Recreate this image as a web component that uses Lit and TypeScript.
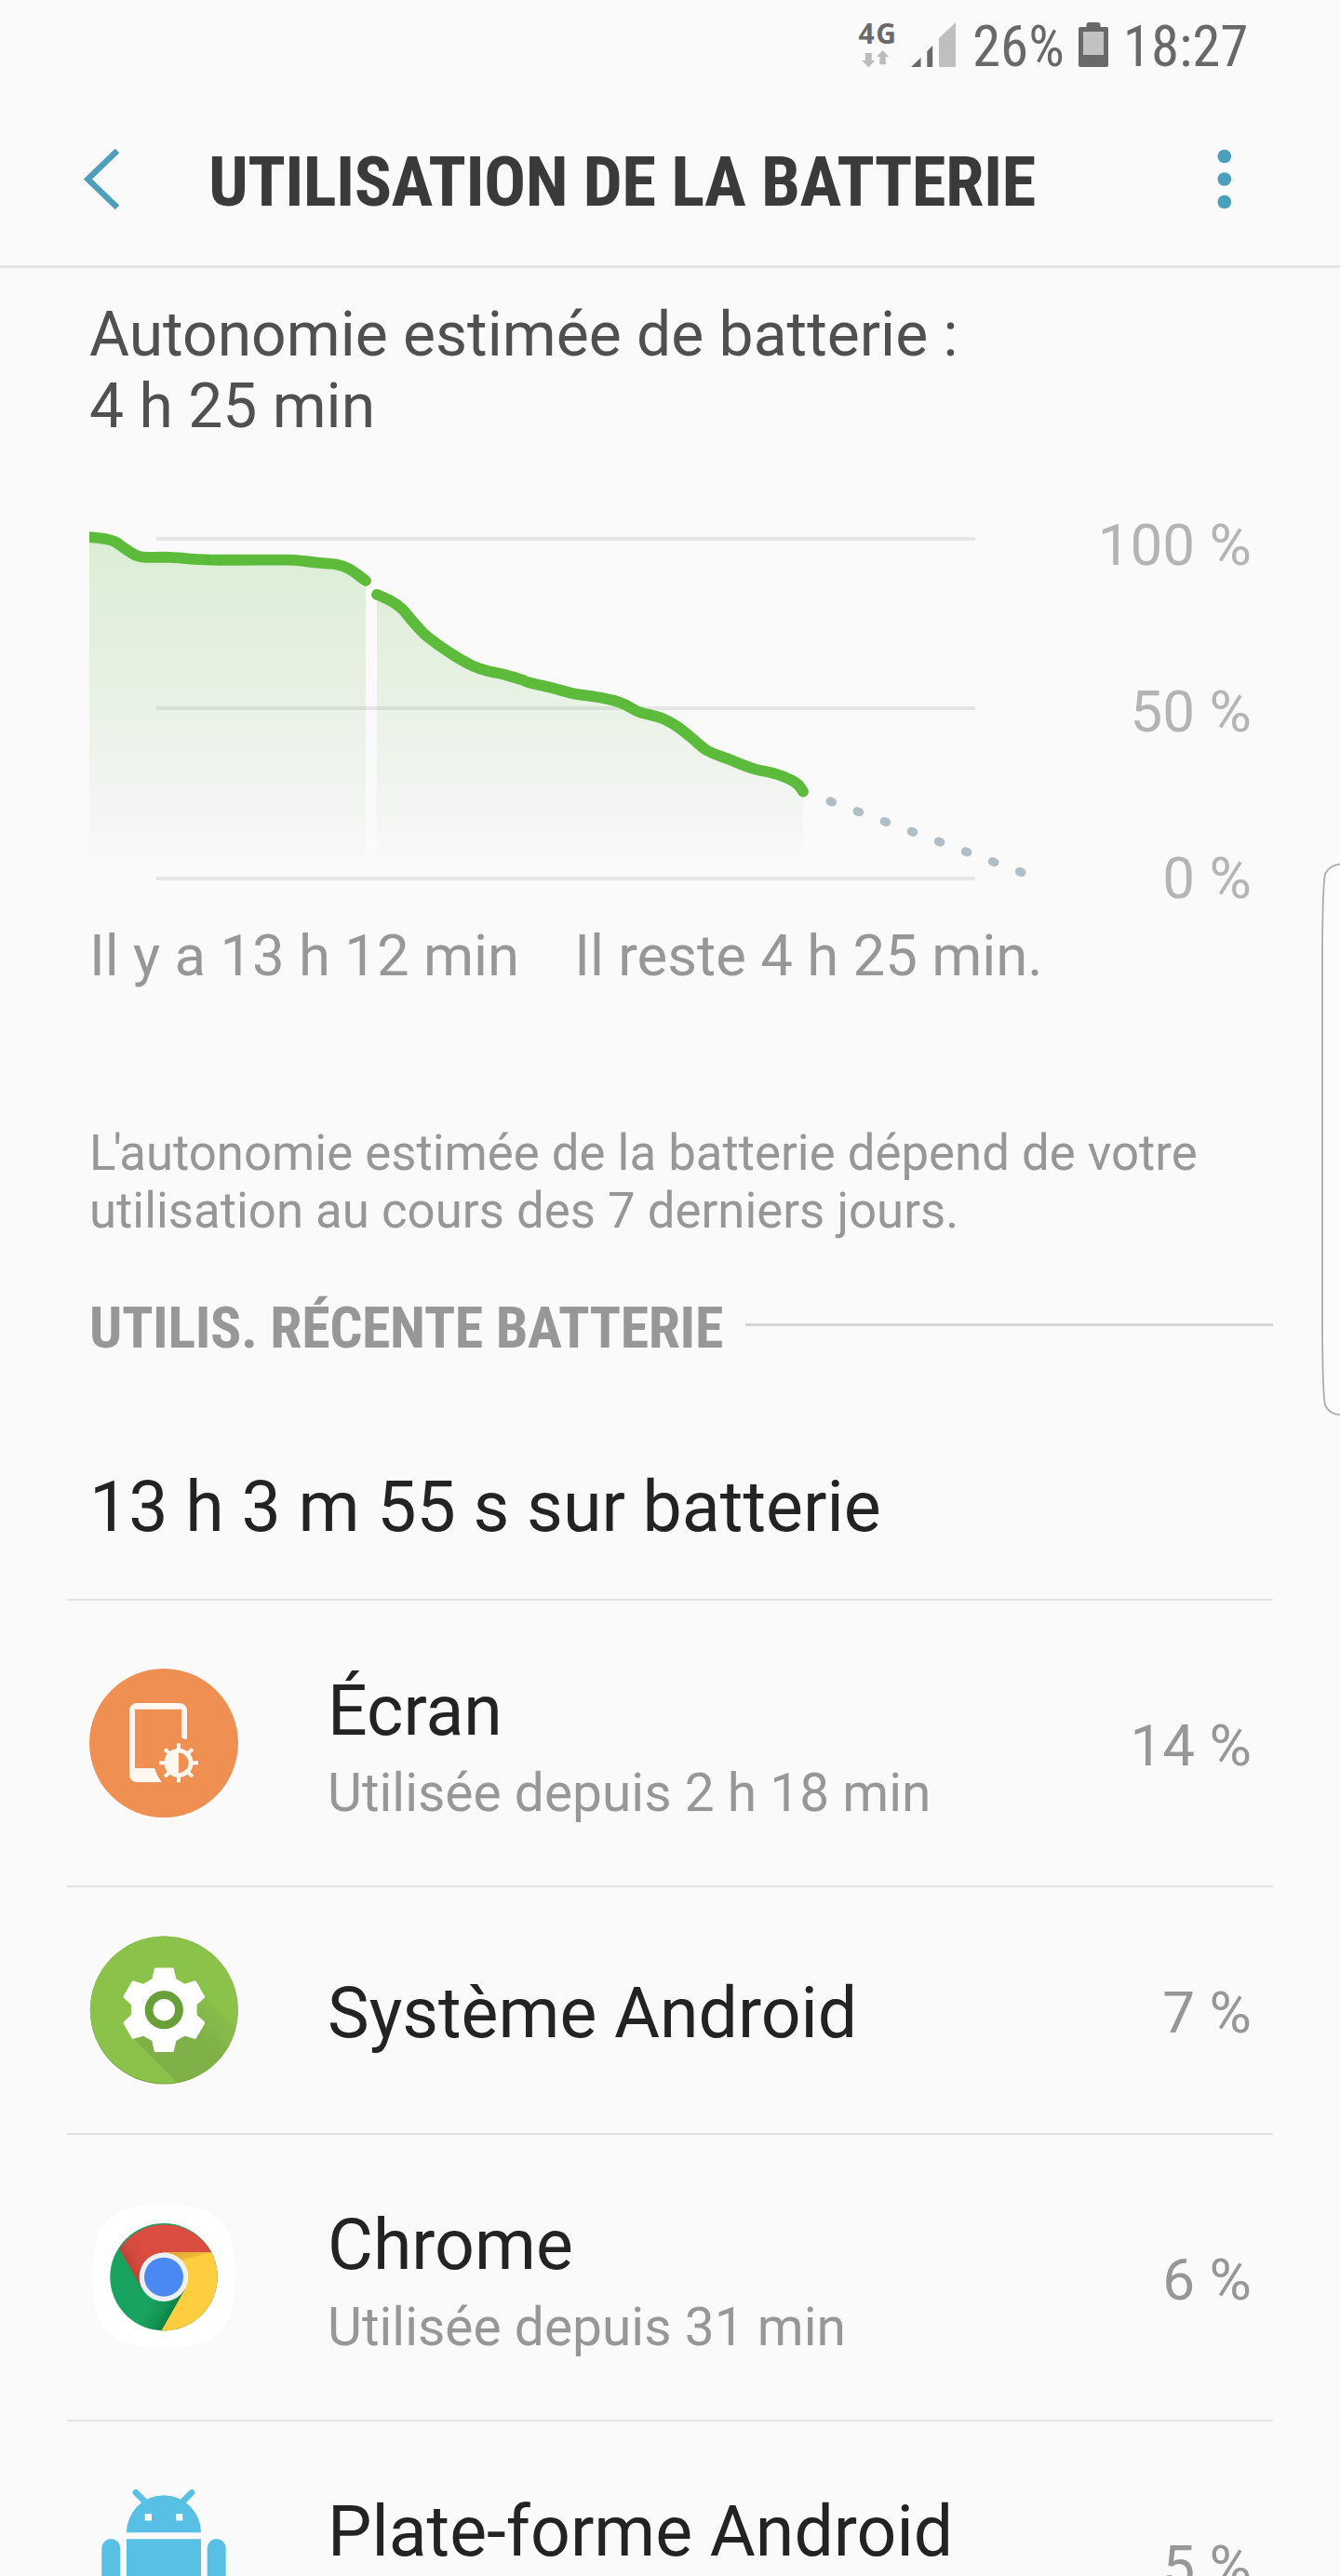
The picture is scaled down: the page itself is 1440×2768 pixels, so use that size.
import { LitElement, html, svg, css, nothing, type TemplateResult } from "lit";
import { customElement } from "lit/decorators.js";
import { classMap } from "lit/directives/class-map.js";

type Point = [number, number];

const BEFORE_GAP: Point[] = [
  [96, 577.2], [110, 578.6], [123.3, 582], [135, 590], [146.7, 597], [157, 598.9], [183.3, 598.9],
  [226.7, 601.6], [306.7, 601.6], [326.7, 603], [346.7, 605.2], [361.7, 606.5], [375, 611.2], [393, 624],
];

const AFTER_GAP: Point[] = [
  [405, 638.8], [420, 645.7], [431.7, 654], [443.3, 667.5], [456.7, 681.9], [473.3, 694.6], [490, 705.6],
  [508.3, 715.6], [523.3, 720.8], [543.3, 725.2], [560, 730.2], [570, 733.8], [591.7, 738.8], [616.7, 745.4],
  [640, 748.7], [660, 752.7], [671.7, 757.2], [686.7, 765], [710, 771.2], [726.7, 780], [741.7, 791.5],
  [760, 806.5], [783.3, 815.8], [808.3, 825.6], [835, 832], [855, 841], [863, 850.6],
];

/** Smooth curve through the given samples (Catmull-Rom converted to cubic segments). */
function smooth(points: Point[]): string {
  const f = (n: number) => n.toFixed(1);
  let d = `M${f(points[0][0])} ${f(points[0][1])}`;
  for (let i = 0; i < points.length - 1; i++) {
    const p0 = points[Math.max(0, i - 1)];
    const p1 = points[i];
    const p2 = points[i + 1];
    const p3 = points[Math.min(points.length - 1, i + 2)];
    d += ` C${f(p1[0] + (p2[0] - p0[0]) / 6)} ${f(p1[1] + (p2[1] - p0[1]) / 6)}`;
    d += ` ${f(p2[0] - (p3[0] - p1[0]) / 6)} ${f(p2[1] - (p3[1] - p1[1]) / 6)} ${f(p2[0])} ${f(p2[1])}`;
  }
  return d;
}

/** Six-toothed cog centred on the origin. */
function cog(): string {
  const tooth: Point[] = [[-11.6, -32.2], [-9, -43.6], [9, -43.6], [11.6, -32.2]];
  const parts: string[] = [];
  for (let k = 0; k < 6; k++) {
    const a = (k * Math.PI) / 3;
    for (const [x, y] of tooth) {
      parts.push(
        `${(x * Math.cos(a) - y * Math.sin(a)).toFixed(2)} ${(x * Math.sin(a) + y * Math.cos(a)).toFixed(2)}`,
      );
    }
  }
  return `M${parts.join("L")}Z`;
}

const screenIcon = svg`
  <circle cx="80" cy="80" r="80" fill="#ef9052"/>
  <path fill="#fff8f0" d="M43 45a8 8 0 0 1 8-8H97a8 8 0 0 1 8 8V76L99 74.8V43.7H49V107H70Q72.500 115 77.700 122H51a8 8 0 0 1-8-8Z"/>
  <g stroke="#fff8f0" stroke-width="4">
    ${[0, 45, 90, 135].map((a) => svg`<path d="M96 80.300V122.300" transform="rotate(${a} 96 101.300)"/>`)}
  </g>
  <circle cx="96" cy="101.300" r="15.500" fill="#fff8f0"/>
  <path fill="#ef9052" d="M96 90.600a10.700 10.700 0 0 1 0 21.400Z"/>`;

const systemIcon = svg`
  <defs>
    <clipPath id="disc"><circle cx="80.300" cy="80" r="79.500"/></clipPath>
    <linearGradient id="cast" gradientUnits="userSpaceOnUse" x1="95" y1="125" x2="142" y2="78">
      <stop offset="0" stop-color="#80b048"/><stop offset=".45" stop-color="#80b149"/><stop offset="1" stop-color="#89bf4a"/>
    </linearGradient>
  </defs>
  <circle cx="80.300" cy="80" r="79.500" fill="#729f40"/>
  <g clip-path="url(#disc)">
    <circle cx="80.300" cy="79" r="79.500" fill="#8bc34a"/>
    <path fill="url(#cast)" d="M47 110.500L96 159.500L165 165V106L122.500 64.500L80 80Z"/>
  </g>
  <g transform="translate(80.300 79.700)">
    <path fill="#fff" stroke="#fff" stroke-width="3.200" stroke-linejoin="round" d=${cog()}/>
    <circle r="16.200" fill="none" stroke="#689f38" stroke-width="8.800"/>
  </g>`;

const chromeIcon = svg`
  <defs>
    <linearGradient id="red" gradientUnits="userSpaceOnUse" x1="38" y1="73" x2="66" y2="57">
      <stop offset="0" stop-color="#b53a30"/><stop offset=".5" stop-color="#d24a3e"/><stop offset="1" stop-color="#dc4d41"/>
    </linearGradient>
    <linearGradient id="gold" gradientUnits="userSpaceOnUse" x1="92" y1="53" x2="95" y2="63">
      <stop offset="0" stop-color="#e2a633"/><stop offset="1" stop-color="#f0b83a"/>
    </linearGradient>
    <linearGradient id="green" gradientUnits="userSpaceOnUse" x1="91" y1="117" x2="68" y2="104">
      <stop offset="0" stop-color="#0c7f42"/><stop offset=".5" stop-color="#149655"/><stop offset="1" stop-color="#1aa260"/>
    </linearGradient>
  </defs>
  <path fill="#fff" d="M80 1.700C138 1.700 156.700 21 156.700 78.700S138 155.700 80 155.700S3.300 136 3.300 78.700S22 1.700 80 1.700Z"/>
  <circle cx="80" cy="79.700" r="57.700" fill="url(#green)"/>
  <path fill="url(#red)" d="M32.300 49.700A57.800 57.800 0 0 1 131.400 53.300H80V79.700L57.200 92.900Z"/>
  <path fill="#ffcd40" d="M131.400 53.300A57.800 57.800 0 0 1 77.400 137.400L102.800 92.900L80 79.700V53.300Z"/>
  <path fill="url(#gold)" d="M80 53.300H131.400L98 62Z"/>
  <circle cx="80" cy="79.700" r="26.300" fill="#eef0f1"/>
  <circle cx="80" cy="79.700" r="21" fill="#4a89f3"/>`;

const androidIcon = svg`
  <g fill="#58c0e4">
    <path d="M40 46.300a40 40 0 0 1 80 0Z"/>
    <path d="M40 53.300H120V122a8 8 0 0 1-8 8H48a8 8 0 0 1-8-8Z"/>
    <rect x="13.300" y="53" width="20" height="66" rx="10"/>
    <rect x="126.700" y="53" width="20" height="66" rx="10"/>
  </g>
  <path stroke="#58c0e4" stroke-width="6.600" stroke-linecap="round" d="M50 3.300L62 15.300M110 3.300L98 15.300"/>
  <path fill="#fafafa" d="M59.700 26.300h7.300v7.300h-7.300zM93 26.300h7.300v7.300H93z"/>`;

interface Usage {
  name: string;
  detail?: string;
  percent: string;
  tall: boolean;
  icon: TemplateResult<2>;
}

const USAGES: Usage[] = [
  { name: "Écran", detail: "Utilisée depuis 2 h 18 min", percent: "14 %", tall: true, icon: screenIcon },
  { name: "Système Android", percent: "7 %", tall: false, icon: systemIcon },
  { name: "Chrome", detail: "Utilisée depuis 31 min", percent: "6 %", tall: true, icon: chromeIcon },
  { name: "Plate-forme Android", percent: "5 %", tall: true, icon: androidIcon },
];

@customElement("status-bar")
class StatusBar extends LitElement {
  static styles = css`
    :host { display: flex; align-items: flex-start; justify-content: flex-end; height: 100px; padding-right: 98.500px; box-sizing: border-box; color: #696969; }
    svg { display: block; flex: none; }
    .net { width: 42px; padding-top: 21px; }
    .gen { font: 700 30px/30px "Open Sans", "Noto Sans", sans-serif; letter-spacing: 1.6px; white-space: nowrap; }
    .signal { margin: 24px 16.500px 0 14px; }
    .battery { margin: 24px 14.500px 0 14.500px; }
    .text { font: 400 61px/100px "Roboto Condensed", Roboto, sans-serif; white-space: nowrap; }
  `;
  render() {
    return html`
      <div class="net">
        <div class="gen">4G</div>
        <svg width="42" height="22" viewBox="921.7 51 42 22" fill="#bdbdbd">
          <path d="M929.500 57h7v8h3.500l-7 7.500l-7-7.500h3.500zM948.300 54l6.700 7h-3.500v8.300h-6.500v-8.300h-3.500z"/>
        </svg>
      </div>
      <svg class="signal" width="50" height="48" viewBox="978 24 50 48">
        <path fill="#696969" d="M979 72L989.500 62V72ZM996.300 72V55L1002.200 49V72Z"/>
        <path fill="#bfbfbf" d="M1009 72V41L1027 24V72Z"/>
      </svg>
      <span class="text">26%</span>
      <svg class="battery" width="34" height="48" viewBox="1158 24 34 48">
        <path fill="#696969" d="M1161 29H1167.500V27a3 3 0 0 1 3-3H1179.500a3 3 0 0 1 3 3V29H1189a2 2 0 0 1 2 2V70a2 2 0 0 1-2 2H1161a2 2 0 0 1-2-2V31a2 2 0 0 1 2-2Z"/>
        <path fill="#c2c2c2" d="M1164 34H1186V59H1164Z"/>
      </svg>
      <span class="text">18:27</span>`;
  }
}

@customElement("battery-chart")
class BatteryChart extends LitElement {
  static styles = css`
    :host { display: flex; justify-content: space-between; height: 418px; }
    .plot { display: block; width: 1020px; height: 418px; }
    .scale { display: flex; flex-direction: column; justify-content: space-between; align-items: flex-end; font-size: 62px; line-height: 60px; color: #b4b4b4; white-space: nowrap; }
  `;
  private area(points: Point[]) {
    const first = points[0];
    const last = points[points.length - 1];
    return `${smooth(points)}L${last[0]} 931H${first[0]}Z`;
  }
  render() {
    return html`
      <svg class="plot" viewBox="96 556 1020 418">
        <defs>
          <linearGradient id="fade" gradientUnits="userSpaceOnUse" x1="0" y1="580" x2="0" y2="931">
            <stop offset="0" stop-color="#5dbb3c" stop-opacity=".2"/>
            <stop offset=".5" stop-color="#62b444" stop-opacity=".115"/>
            <stop offset=".8" stop-color="#7fa873" stop-opacity=".06"/>
            <stop offset=".93" stop-color="#8c9c86" stop-opacity=".03"/>
            <stop offset="1" stop-color="#999" stop-opacity="0"/>
          </linearGradient>
        </defs>
        <path fill="#e6e6e6" d="M168 577H1048V581H168ZM168 759H1048V763H168ZM168 942H1048V946H168Z"/>
        <path fill="url(#fade)" d=${this.area(BEFORE_GAP)}/>
        <path fill="url(#fade)" d=${this.area(AFTER_GAP)}/>
        <g fill="none" stroke="#5dbb3c" stroke-width="11.800" stroke-linecap="round" stroke-linejoin="round">
          <path d=${smooth(BEFORE_GAP)}/>
          <path d=${smooth(AFTER_GAP)}/>
        </g>
        <g stroke="#b0bec5" stroke-width="9.400" stroke-linecap="round">
          ${Array.from({ length: 8 }, (_, i) => {
            const x = 893.3 + i * 29.07;
            const y = 861.4 + i * 10.8;
            return svg`<path d="M${x - 1.1} ${y - 0.4}L${x + 1.1} ${y + 0.4}"/>`;
          })}
        </g>
      </svg>
      <div class="scale"><span>100 %</span><span>50 %</span><span>0 %</span></div>`;
  }
}

@customElement("app-root")
class AppRoot extends LitElement {
  static styles = css`
    :host { display: block; position: relative; width: 1440px; height: 2768px; overflow: hidden; background: #fafafa; font-family: Roboto, sans-serif; font-weight: 400; }
    svg { display: block; flex: none; }
    .header { display: flex; align-items: center; box-sizing: border-box; height: 188px; padding: 0 116px 0 90px; border-bottom: 3px solid #e6e6e6; }
    .title { margin: 0 auto 0 96px; padding-top: 4px; font: 700 75px/88px "Roboto Condensed", Roboto, sans-serif; letter-spacing: -0.63px; color: #3a3a3a; white-space: nowrap; }
    .content { padding: 33px 95px 0 96px; }
    .estimate { font-size: 66px; line-height: 77px; color: #505050; }
    .chart { margin-top: 81px; }
    .captions { display: flex; gap: 59px; margin-top: 17px; font-size: 61.700px; line-height: 72px; color: #979797; white-space: nowrap; }
    .note { margin-top: 145px; font-size: 52.750px; line-height: 62px; color: #979797; white-space: nowrap; }
    .elided { letter-spacing: -2.700px; }
    .section { display: flex; align-items: center; gap: 24px; margin: 59px -23px 0 0; }
    .section-name { font: 700 62px/72px "Roboto Condensed", Roboto, sans-serif; letter-spacing: -0.45px; color: #979797; white-space: nowrap; }
    .rule { flex: 1; height: 3px; margin-bottom: 7px; background: #d4d4d4; }
    .elapsed { margin-top: 112px; font-size: 75.300px; line-height: 88px; color: #232323; }
    .list { margin: 55px 72px 0; }
    .row { display: flex; align-items: center; box-sizing: border-box; height: 266px; padding: 0 23px 0 24px; border-top: 2px solid #e3e3e3; }
    .row.tall { height: 308px; }
    .label { flex: 1; margin: 6px 0 0 96px; }
    .tall .label { height: 170px; margin-top: 11px; }
    .name { font-size: 75.200px; line-height: 88px; color: #232323; }
    .detail { margin-top: 8px; font-size: 56.900px; line-height: 74px; color: #979797; }
    .percent { margin-top: 5px; font-size: 62px; line-height: 72px; color: #979797; }
    .edge { position: absolute; top: 926.500px; right: 0; }
  `;

  private row(u: Usage) {
    return html`
      <div class=${classMap({ row: true, tall: u.tall })}>
        <svg width="160" height="160" viewBox="0 0 160 160">${u.icon}</svg>
        <div class="label">
          <div class="name">${u.name}</div>
          ${u.detail ? html`<div class="detail">${u.detail}</div>` : nothing}
        </div>
        <div class="percent">${u.percent}</div>
      </div>`;
  }

  render() {
    return html`
      <status-bar></status-bar>
      <div class="header">
        <svg width="38" height="66" viewBox="90 159.5 38 66" fill="none" stroke="#4f9fbc" stroke-width="6.500">
          <path d="M126 161.500L94.500 192L126 222.500"/>
        </svg>
        <div class="title">UTILISATION DE LA BATTERIE</div>
        <svg width="16" height="66" viewBox="1308 159.500 16 66" fill="#4a9fbc">
          <circle cx="1315.800" cy="167.500" r="7.300"/><circle cx="1315.800" cy="192" r="7.300"/><circle cx="1315.800" cy="216.500" r="7.300"/>
        </svg>
      </div>
      <div class="content">
        <div class="estimate">Autonomie estimée de batterie :<br>4 h 25 min</div>
        <battery-chart class="chart"></battery-chart>
        <div class="captions"><span>Il y a 13 h 12 min</span><span>Il reste 4 h 25 min.</span></div>
        <div class="note"><span class="elided">L'</span>autonomie estimée de la batterie dépend de votre<br>utilisation au cours des 7 derniers jours.</div>
        <div class="section"><span class="section-name">UTILIS. RÉCENTE BATTERIE</span><span class="rule"></span></div>
        <div class="elapsed">13 h 3 m 55 s sur batterie</div>
      </div>
      <div class="list">${USAGES.map((u) => this.row(u))}</div>
      <svg class="edge" width="20" height="595" viewBox="0 0 20 595" fill="#fcfcfc" stroke="#adadad" stroke-width="1.800">
        <path d="M21 1.500Q9 2 4 12Q1.300 25 1 100V495Q1.300 570 4 583Q9 593 21 593.500"/>
      </svg>`;
  }
}
